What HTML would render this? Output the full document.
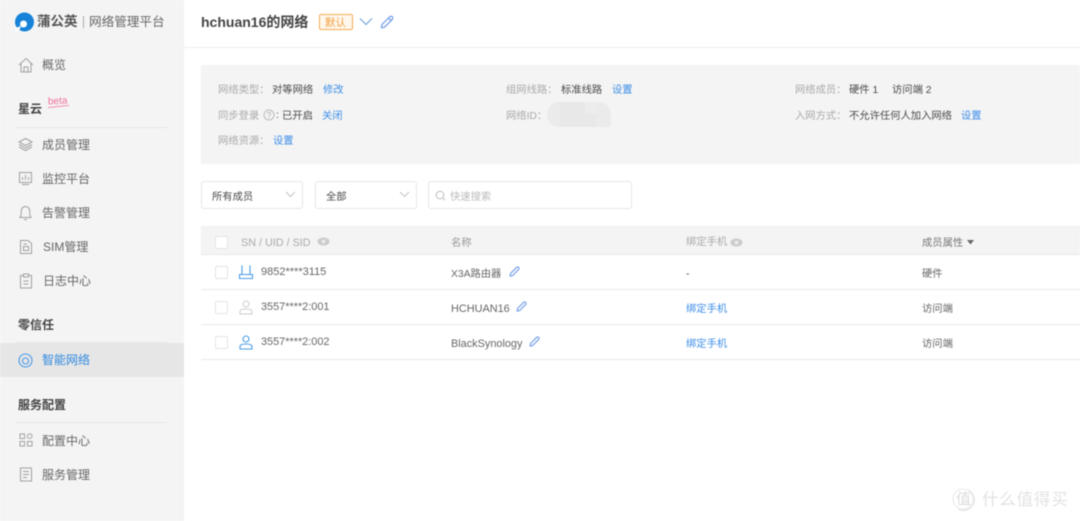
<!DOCTYPE html>
<html lang="zh-CN"><head><meta charset="utf-8"><title>蒲公英</title>
<style>
html,body{margin:0;padding:0;width:1080px;height:521px;overflow:hidden;background:#fff}
#r{position:relative;width:1080px;height:521px;overflow:hidden;font-family:"Liberation Sans","Noto Sans CJK SC",sans-serif;filter:blur(.4px)}
.t,.b,svg{position:absolute}
.t{white-space:nowrap;line-height:16px;font-size:10.3px;color:#555}
.g{color:#aaa}.d{color:#4a4a4a}.l{color:#3f8fe8}
.n{font-size:12px;color:#666}
.h{font-size:12px;font-weight:700;color:#444}
.ic{fill:none;stroke:#a0a0a0;stroke-width:1}
.bl{fill:none;stroke:#4a9be8;stroke-width:1.1}
.pen{fill:none;stroke:#6f9be8;stroke-width:1}
.sel{border:1px solid #e6e6e6;border-radius:3px;box-sizing:border-box;background:#fff}
.cb{width:13px;height:13px;box-sizing:border-box;border:1px solid #e4e4e4;border-radius:2px;background:#fff}
</style></head><body><div id="r">
<div class="b" style="left:0;top:0;width:184px;height:521px;background:#f4f4f4"></div>
<div class="b" style="left:184px;top:47px;width:896px;height:1px;background:#efefef"></div>

<svg style="left:15px;top:12px" width="19" height="20" viewBox="0 0 19 20"><circle cx="9.5" cy="10" r="9.5" fill="#1682d8"/><circle cx="8.5" cy="12" r="3.5" fill="#fff"/><path d="M6 14 C5.5 16.5 5 18 3 19 L1 20 L0 16Z" fill="#fff" opacity=".9"/></svg>
<div class="t" style="left:37px;top:13px;font-size:13.5px;line-height:18px;color:#555;font-weight:700">蒲公英</div>
<div class="b" style="left:83px;top:16px;width:1px;height:12px;background:#aaa"></div>
<div class="t" style="left:89px;top:13px;font-size:12.6px;line-height:18px;color:#666">网络管理平台</div>

<svg style="left:18px;top:57px" width="16" height="16" viewBox="0 0 16 16"><path class="ic" d="M1 8 L8 1.5 L15 8 M3 6.5 V15 H13 V6.5 M6 15 V10 H10 V15"/></svg>
<div class="t n" style="left:42px;top:57px">概览</div>

<div class="t h" style="left:18px;top:101px">星云</div>
<div class="t" style="left:48px;top:96px;font-size:10px;line-height:12px;color:#f0709a;transform:rotate(-3deg)">beta</div>
<div class="b" style="left:48px;top:106px;width:21px;height:1px;background:#f58fb0;transform:rotate(-6deg)"></div>
<div class="b" style="left:15px;top:127px;width:152px;height:1px;background:#e6e6e6"></div>

<svg style="left:18px;top:137px" width="15" height="15" viewBox="0 0 15 15"><path class="ic" d="M7.5 1.5 L14 5 L7.5 8.5 L1 5Z M1 7.5 L7.5 11 L14 7.5 M1 10 L7.5 13.5 L14 10"/></svg>
<div class="t n" style="left:42px;top:137px">成员管理</div>

<svg style="left:18px;top:171px" width="15" height="15" viewBox="0 0 15 15"><path class="ic" d="M1.5 1.5 H13.5 V11.5 H1.5Z M4 13.5 H11 M4.5 9 V6 M7.5 9 V4 M10.5 9 V6"/></svg>
<div class="t n" style="left:42px;top:171px">监控平台</div>

<svg style="left:18px;top:205px" width="15" height="16" viewBox="0 0 15 16"><path class="ic" d="M2 12.5 C3.5 11 3.2 9 3.2 6.5 C3.2 3.5 5 1.5 7.5 1.5 C10 1.5 11.8 3.5 11.8 6.5 C11.8 9 11.5 11 13 12.5Z M6 14.5 H9"/></svg>
<div class="t n" style="left:42px;top:205px">告警管理</div>

<svg style="left:19px;top:239px" width="14" height="16" viewBox="0 0 14 16"><path class="ic" d="M1.5 1.5 H9 L12.5 4.5 V14.5 H1.5Z M4.5 7.5 H9.5 V11.5 H4.5Z M4.5 5 H8"/></svg>
<div class="t n" style="left:43px;top:239px">SIM管理</div>

<svg style="left:19px;top:273px" width="14" height="16" viewBox="0 0 14 16"><path class="ic" d="M4.5 2.5 H1.5 V15 H12.5 V2.5 H9.5 M4.5 1 H9.5 V4 H4.5Z M4.5 8 H9.5 M4.5 11 H9.5"/></svg>
<div class="t n" style="left:43px;top:273px">日志中心</div>

<div class="t h" style="left:18px;top:317px">零信任</div>
<div class="b" style="left:15px;top:342px;width:152px;height:1px;background:#e6e6e6"></div>
<div class="b" style="left:0;top:343px;width:184px;height:34px;background:#e6e6e6"></div>
<svg style="left:18px;top:353px" width="15" height="15" viewBox="0 0 15 15"><circle class="bl" cx="7.5" cy="7.5" r="6.5"/><circle class="bl" cx="7.5" cy="8" r="3"/></svg>
<div class="t n" style="left:42px;top:352px;color:#2f8ae0">智能网络</div>

<div class="t h" style="left:18px;top:397px">服务配置</div>
<div class="b" style="left:15px;top:422px;width:152px;height:1px;background:#e6e6e6"></div>

<svg style="left:19px;top:433px" width="14" height="14" viewBox="0 0 14 14"><path class="ic" d="M1 1 H5.5 V5.5 H1Z M1 8.5 H5.5 V13 H1Z M8.5 8.5 H13 V13 H8.5Z"/><circle class="ic" cx="10.7" cy="3.2" r="2.3"/></svg>
<div class="t n" style="left:42px;top:433px">配置中心</div>

<svg style="left:19px;top:467px" width="14" height="15" viewBox="0 0 14 15"><path class="ic" d="M1.5 1 H12.5 V14 H1.5Z M4 4.5 H10 M4 7.5 H10 M4 10.5 H8"/></svg>
<div class="t n" style="left:42px;top:467px">服务管理</div>

<div class="t" style="left:201px;top:12px;font-size:14px;line-height:20px;font-weight:700;color:#444">hchuan16的网络</div>
<div class="b" style="left:319px;top:14px;width:34px;height:16px;box-sizing:border-box;border:1px solid #f6ab57;border-radius:2px;background:#fff7ec"></div>
<div class="t" style="left:325px;top:15px;font-size:10.5px;color:#f0a040">默认</div>
<svg style="left:359px;top:17px" width="14" height="10" viewBox="0 0 14 10"><path d="M1 1.5 L7 7.5 L13 1.5" fill="none" stroke="#6a9fd8" stroke-width="1.1"/></svg>
<svg style="left:380px;top:15px" width="14" height="14" viewBox="0 0 14 14"><path class="pen" style="stroke-width:1.2" d="M2 9.5 L9.5 2 C10.5 1 12 1 12.5 2 C13 3 13 3.7 12 4.7 L4.5 12.2 L1.5 12.8Z M8.5 3 L11 5.5"/></svg>

<div class="b" style="left:201px;top:65px;width:879px;height:99px;background:#f4f4f4;border-radius:2px"></div>

<div class="t g" style="left:218px;top:83px">网络类型：</div><div class="t d" style="left:272px;top:83px">对等网络</div><div class="t l" style="left:323px;top:83px">修改</div>
<div class="t g" style="left:218px;top:109px">同步登录</div>
<svg style="left:263px;top:109px" width="12" height="12" viewBox="0 0 12 12"><circle cx="6" cy="6" r="5" fill="none" stroke="#bbb"/><text x="6" y="9" font-size="8" fill="#aaa" text-anchor="middle" font-family="Liberation Sans">?</text></svg>
<div class="t d" style="left:276px;top:108px">:</div>
<div class="t d" style="left:282px;top:109px">已开启</div><div class="t l" style="left:322px;top:109px">关闭</div>
<div class="t g" style="left:218px;top:134px">网络资源：</div><div class="t l" style="left:273px;top:134px">设置</div>

<div class="t g" style="left:506px;top:83px">组网线路：</div><div class="t d" style="left:561px;top:83px">标准线路</div><div class="t l" style="left:612px;top:83px">设置</div>
<div class="t g" style="left:506px;top:109px">网络ID：</div>
<div class="b" style="left:547px;top:102px;width:64px;height:25px;background:#ebebeb;border-radius:12px 12px 0 12px"></div>
<div class="b" style="left:560px;top:102px;width:36px;height:25px;background:#e8e8e8"></div>
<div class="b" style="left:585px;top:102px;width:12px;height:12px;background:#ececec"></div>

<div class="t g" style="left:795px;top:83px">网络成员：</div><div class="t d" style="left:849px;top:83px">硬件 1</div><div class="t d" style="left:892px;top:83px">访问端 2</div>
<div class="t g" style="left:795px;top:109px">入网方式：</div><div class="t d" style="left:849px;top:109px">不允许任何人加入网络</div><div class="t l" style="left:961px;top:109px">设置</div>

<div class="b sel" style="left:201px;top:181px;width:102px;height:28px"></div>
<div class="t d" style="left:212px;top:190px">所有成员</div>
<svg style="left:285px;top:191px" width="11" height="7" viewBox="0 0 11 7"><path d="M1 1 L5.5 5.5 L10 1" fill="none" stroke="#c4c4c4"/></svg>
<div class="b sel" style="left:315px;top:181px;width:102px;height:28px"></div>
<div class="t d" style="left:326px;top:190px">全部</div>
<svg style="left:399px;top:191px" width="11" height="7" viewBox="0 0 11 7"><path d="M1 1 L5.5 5.5 L10 1" fill="none" stroke="#c4c4c4"/></svg>
<div class="b sel" style="left:428px;top:181px;width:204px;height:28px"></div>
<svg style="left:435px;top:190px" width="11" height="11" viewBox="0 0 11 11"><circle cx="5" cy="5" r="3.8" fill="none" stroke="#bbb"/><path d="M8 8 L10 10" stroke="#bbb"/></svg>
<div class="t" style="left:450px;top:190px;color:#bbb">快速搜索</div>

<div class="b" style="left:201px;top:226px;width:879px;height:29px;background:#f4f4f4;border-top:1px solid #efefef;border-bottom:1px solid #eaeaea;box-sizing:border-box"></div>
<div class="b cb" style="left:215px;top:236px"></div>
<div class="t g" style="left:241px;top:235px;font-size:10.8px">SN / UID / SID</div>
<svg style="left:317px;top:237px" width="13" height="9" viewBox="0 0 13 9"><ellipse cx="6.5" cy="4.5" rx="6" ry="4" fill="#ccc"/><circle cx="6.5" cy="4.5" r="1.8" fill="#eee"/></svg>
<div class="t g" style="left:451px;top:236px;color:#999">名称</div>
<div class="t g" style="left:686px;top:235px">绑定手机</div>
<svg style="left:730px;top:238px" width="13" height="9" viewBox="0 0 13 9"><ellipse cx="6.5" cy="4.5" rx="6" ry="4" fill="#ccc"/><circle cx="6.5" cy="4.5" r="1.8" fill="#eee"/></svg>
<div class="t" style="left:922px;top:236px;color:#777">成员属性</div>
<svg style="left:967px;top:240px" width="8" height="5" viewBox="0 0 8 5"><path d="M0 0 H7 L3.5 4.5Z" fill="#666"/></svg>

<div class="b" style="left:201px;top:289px;width:879px;height:1px;background:#e9e9e9"></div>
<div class="b" style="left:201px;top:324px;width:879px;height:1px;background:#e9e9e9"></div>
<div class="b" style="left:201px;top:359px;width:879px;height:1px;background:#e9e9e9"></div>

<div class="b cb" style="left:215px;top:266px"></div>
<svg style="left:238px;top:265px" width="16" height="15" viewBox="0 0 16 15"><path class="bl" d="M4 .5 V9 M12 .5 V9 M1.5 9.5 H14.5 V13.5 H1.5Z"/></svg>
<div class="t" style="left:261px;top:264px;font-size:11px;color:#666">9852****3115</div>
<div class="t" style="left:451px;top:267px;color:#666">X3A路由器</div>
<svg style="left:509px;top:266px" width="11" height="11" viewBox="0 0 14 14"><path class="pen" style="stroke-width:1.4" d="M2 9.5 L9.5 2 C10.5 1 12 1 12.5 2 C13 3 13 3.7 12 4.7 L4.5 12.2 L1.5 12.8Z"/></svg>
<div class="t d" style="left:686px;top:267px">-</div>
<div class="t" style="left:922px;top:267px;color:#666">硬件</div>

<div class="b cb" style="left:215px;top:301px"></div>
<svg style="left:239px;top:300px" width="14" height="15" viewBox="0 0 14 15"><circle cx="7" cy="4" r="3" fill="none" stroke="#ccc"/><path d="M1 14 V11.5 C1 10 3 9 7 9 C11 9 13 10 13 11.5 V14Z" fill="none" stroke="#ccc"/></svg>
<div class="t" style="left:261px;top:299px;font-size:10.9px;color:#666">3557****2:001</div>
<div class="t" style="left:451px;top:301px;font-size:10.9px;color:#666">HCHUAN16</div>
<svg style="left:516px;top:301px" width="11" height="11" viewBox="0 0 14 14"><path class="pen" style="stroke-width:1.4" d="M2 9.5 L9.5 2 C10.5 1 12 1 12.5 2 C13 3 13 3.7 12 4.7 L4.5 12.2 L1.5 12.8Z"/></svg>
<div class="t l" style="left:686px;top:302px">绑定手机</div>
<div class="t" style="left:922px;top:302px;color:#666">访问端</div>

<div class="b cb" style="left:215px;top:336px"></div>
<svg style="left:239px;top:335px" width="14" height="15" viewBox="0 0 14 15"><circle class="bl" cx="7" cy="4" r="3"/><path class="bl" d="M1 14 V11.5 C1 10 3 9 7 9 C11 9 13 10 13 11.5 V14Z"/></svg>
<div class="t" style="left:261px;top:334px;font-size:10.9px;color:#666">3557****2:002</div>
<div class="t" style="left:451px;top:336px;font-size:10.9px;color:#666">BlackSynology</div>
<svg style="left:529px;top:336px" width="11" height="11" viewBox="0 0 14 14"><path class="pen" style="stroke-width:1.4" d="M2 9.5 L9.5 2 C10.5 1 12 1 12.5 2 C13 3 13 3.7 12 4.7 L4.5 12.2 L1.5 12.8Z"/></svg>
<div class="t l" style="left:686px;top:337px">绑定手机</div>
<div class="t" style="left:922px;top:337px;color:#666">访问端</div>

<svg style="left:952px;top:488px" width="24" height="24" viewBox="0 0 24 24"><path d="M16 2 C22 5 24 12 21 17 C18 22 11 24 6 21" fill="none" stroke="#e2e2e2" stroke-width="1.2"/><circle cx="11" cy="11" r="10" fill="none" stroke="#e8e8e8"/></svg>
<div class="t" style="left:956px;top:491px;font-size:15px;line-height:18px;color:#dcdcdc">值</div>
<div class="t" style="left:982px;top:490px;font-size:16.5px;line-height:20px;color:#e2e2e2;letter-spacing:.8px">什么值得买</div>
</div></body></html>
